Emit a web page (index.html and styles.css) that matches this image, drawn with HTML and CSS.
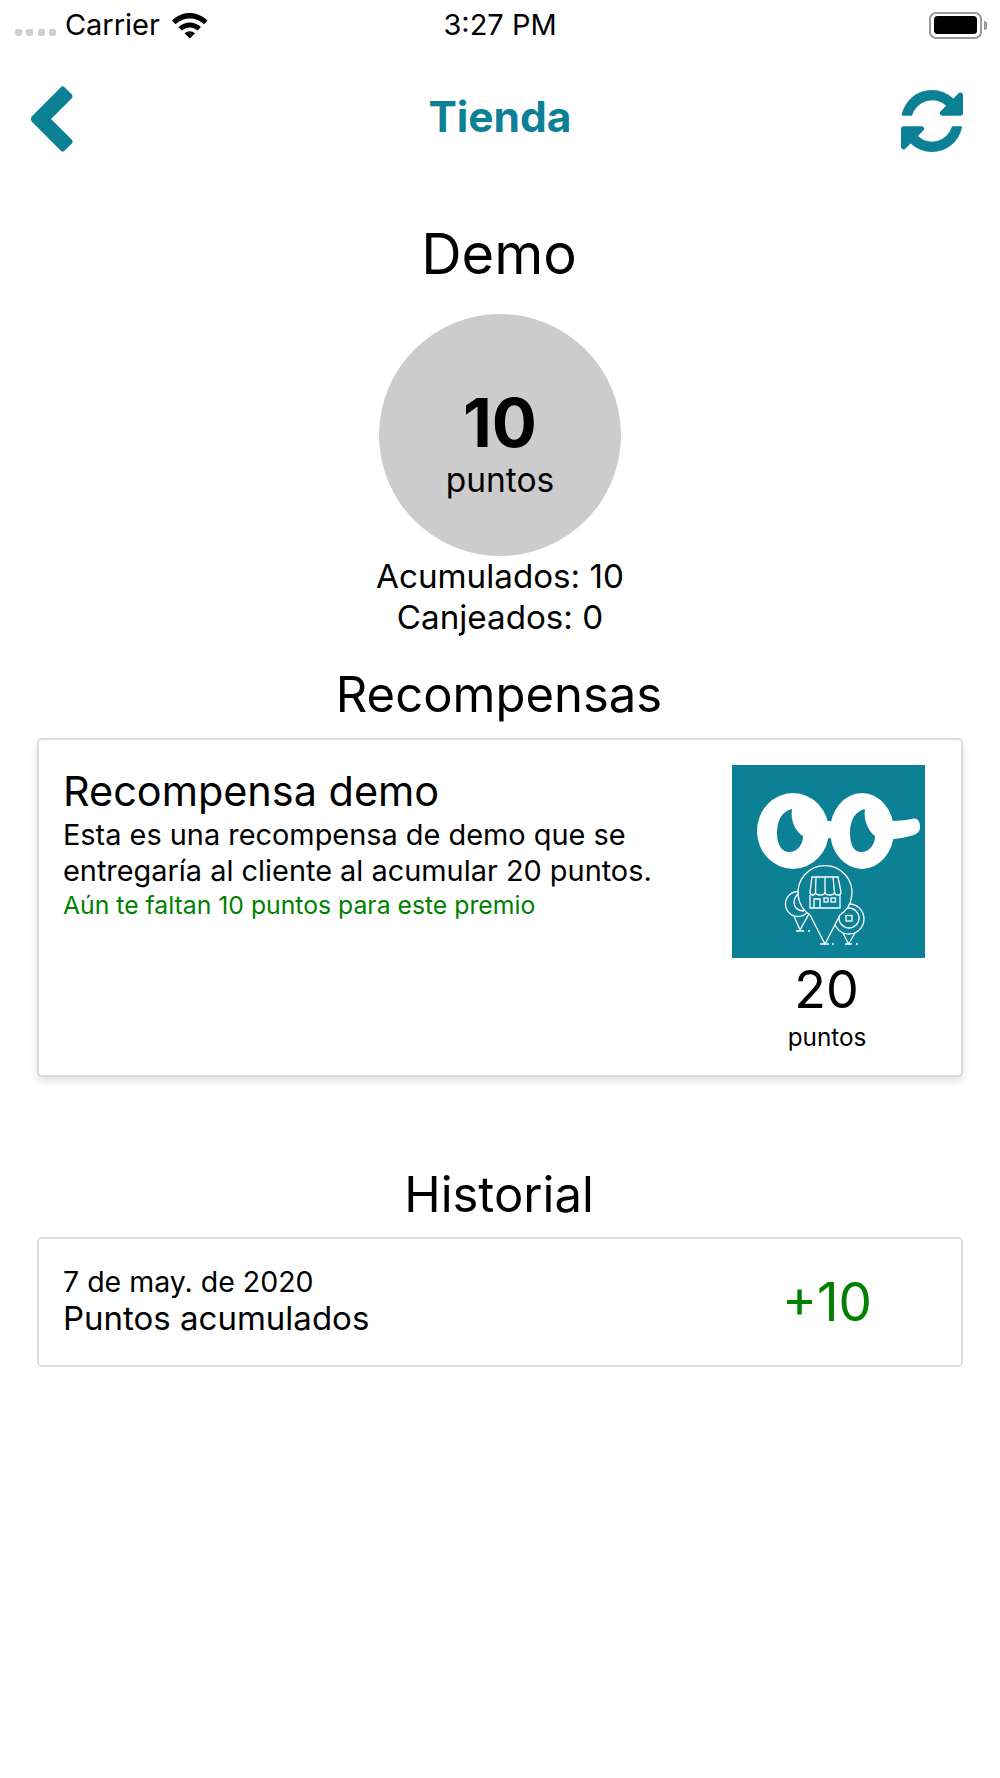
FILE: index.html
```html
<!DOCTYPE html>
<html lang="es">
<head>
<meta charset="utf-8">
<title>Tienda</title>
<link rel="stylesheet" href="styles.css">
</head>
<body>
<div class="status">
  <div class="status-left">
    <div class="dots"><i></i><i></i><i></i><i></i></div>
    <span class="carrier">Carrier</span>
    <svg class="wifi" width="38" height="28" viewBox="0 0 38 28"><path d="M1 9.500C11-.5 26-.5 36.500 9.500l-3.500 3.700C25 5.500 12.500 5.500 4.500 13.200z"/><path d="M7.500 16C14 10 23.500 10 30 16l-3.500 3.600C22 15.500 15.500 15.500 11 19.600z"/><path d="M13.500 22.200c3.200-2.700 7.300-2.700 10.500 0L18.800 27.500z"/></svg>
  </div>
  <span class="clock">3:27 PM</span>
  <div class="battery"><div class="battery-body"><div class="battery-fill"></div></div><div class="battery-cap"></div></div>
</div>
<header class="nav">
  <svg class="back" width="44" height="66" viewBox="0 0 44 66"><path fill="#0c8196" d="M30.600 1.400a3 3 0 0 1 4.200 0l6.800 6.800a3 3 0 0 1 0 4.200L21 33l20.600 20.600a3 3 0 0 1 0 4.200l-6.800 6.800a3 3 0 0 1-4.200 0L2.200 36a4.200 4.200 0 0 1 0-6z"/></svg>
  <h1 class="nav-title">Tienda</h1>
  <svg class="refresh" width="62" height="62" viewBox="0 0 1536 1536"><path fill="#0c8196" d="M1511 928q0 5-1 7-64 268-268 434.500t-478 166.500q-146 0-282.500-55t-243.500-157l-129 129q-19 19-45 19t-45-19-19-45v-448q0-26 19-45t45-19h448q26 0 45 19t19 45-19 45l-137 137q71 66 161 102t187 36q134 0 250-65t186-179q11-17 53-117 8-23 30-23h192q13 0 22.500 9.500t9.500 22.500zm25-800v448q0 26-19 45t-45 19h-448q-26 0-45-19t-19-45 19-45l138-138q-148-137-349-137-134 0-250 65t-186 179q-11 17-53 117-8 23-30 23h-199q-13 0-22.500-9.500t-9.500-22.500v-7q65-268 270-434.500t480-166.500q146 0 284 55.500t245 156.500l130-129q19-19 45-19t45 19 19 45z"/></svg>
</header>
<main class="content">
  <h2 class="name">Demo</h2>
  <div class="circle">
    <span class="circle-num">10</span>
    <span class="circle-label">puntos</span>
  </div>
  <p class="stat">Acumulados: 10</p>
  <p class="stat">Canjeados: 0</p>
  <h2 class="section section-rewards">Recompensas</h2>
  <section class="card card-reward">
    <div class="reward-text">
      <h3 class="reward-title">Recompensa demo</h3>
      <p class="reward-desc">Esta es una recompensa de demo que se entregaría al cliente al acumular 20 puntos.</p>
      <p class="reward-hint">Aún te faltan 10 puntos para este premio</p>
    </div>
    <div class="reward-side">
      <svg class="logo" width="193" height="193" viewBox="0 0 193 193">
        <rect width="193" height="193" fill="#0c8196"/>
        <g fill="#fff">
          <ellipse cx="61" cy="66" rx="36" ry="38"/>
          <ellipse cx="130" cy="66" rx="32" ry="38"/>
          <path d="M90 56H104V73H88z"/>
          <path d="M158 56C168 56 176 55 182 53.500C186 53 188 57 188 62C188 67 185 69 180 70.500C174 72.500 166 73.500 158 74.500z"/>
        </g>
        <g fill="#0c8196">
          <path d="M60 44C51 46 45 54 45 68C45 80 50 87 57 87C66 87 71 79 71 71C64 67 58 56 60 44z"/>
          <path d="M133 44C124 46 118 54 118 68C118 80 122 87 129 87C138 87 143 79 143 71C137 67 131 56 133 44z"/>
        </g>
        <g fill="none" stroke="#fff" stroke-width="1.300">
          <circle cx="66" cy="139" r="12.500"/>
          <path d="M70 127.500C60 129 58 146 72 146"/>
          <path d="M62 151L68 165L78 147"/>
          <circle cx="117" cy="154" r="15"/>
          <circle cx="117" cy="153" r="10"/>
          <rect x="114" y="150.500" width="6" height="5.500"/>
          <path d="M111 168L116.500 179L123 168"/>
          <path fill="#0c8196" d="M78 150A27 27 0 1 1 108 150L93 179z"/>
          <path d="M78 127L80 112H106L109 127"/>
          <path d="M84 112L83.500 127M93 112V127M101 112L102.500 127"/>
          <path d="M78 127C78 131 83.500 131 83.500 127C83.500 131 93 131 93 127C93 131 102.500 131 102.500 127C102.500 131 109 131 109 127"/>
          <path d="M78 130V143H108V130"/>
          <path d="M82 143V134H88V143"/>
          <rect x="92" y="133" width="4" height="4"/>
          <rect x="99" y="133" width="4.500" height="4"/>
          <path d="M64 166H72M76 166H78M88 179H97M100 179H102M113 179H120M124 179H126"/>
        </g>
      </svg>
      <span class="side-num">20</span>
      <span class="side-label">puntos</span>
    </div>
  </section>
  <h2 class="section section-history">Historial</h2>
  <section class="card card-history">
    <div class="history-text">
      <p class="history-date">7 de may. de 2020</p>
      <p class="history-label">Puntos acumulados</p>
    </div>
    <span class="history-points">+10</span>
  </section>
</main>
</body>
</html>
```
FILE: styles.css
```css
* { box-sizing: border-box; }
html, body { margin: 0; padding: 0; }
body {
  width: 1000px;
  height: 1778px;
  background: #fff;
  color: #000;
  font-family: Inter, "Liberation Sans", sans-serif;
  overflow: hidden;
}
h1, h2, h3, p { margin: 0; font-weight: 400; }

.status {
  height: 50px;
  padding: 0 13px 0 15px;
  position: relative;
  display: flex;
  align-items: center;
  justify-content: space-between;
}
.status-left { display: flex; align-items: center; }
.dots { display: flex; gap: 4.300px; margin-top: 15px; margin-right: 9px; }
.dots i { width: 7px; height: 7px; border-radius: 2px; background: #cfcfcf; }
.carrier { font-size: 29px; line-height: 50px; }
.wifi { margin-left: 11px; }
.clock {
  position: absolute;
  left: 0;
  right: 0;
  text-align: center;
  font-size: 29px;
  line-height: 50px;
}
.battery { display: flex; align-items: center; }
.battery-body {
  width: 53px;
  height: 27px;
  border: 2px solid #9a9a9a;
  border-radius: 7px;
  padding: 2.500px 3px;
}
.battery-fill { width: 100%; height: 100%; background: #000; border-radius: 3.500px; }
.battery-cap {
  width: 3px;
  height: 9px;
  margin-left: 2px;
  background: #9a9a9a;
  border-radius: 0 3px 3px 0;
}

.nav {
  height: 133px;
  padding: 36px 37px 0 30px;
  display: flex;
  justify-content: space-between;
  align-items: flex-start;
  position: relative;
}
.refresh { margin-top: 4px; }
.nav-title {
  position: absolute;
  left: 0;
  right: 0;
  top: 40px;
  text-align: center;
  font-size: 42.500px;
  line-height: 54px;
  font-weight: 700;
  color: #0c8196;
}

.content {
  padding: 0 37px;
  display: flex;
  flex-direction: column;
  align-items: center;
}
.name { font-size: 56px; line-height: 68px; margin-top: 37px; padding-right: 2px; }
.circle {
  width: 242px;
  height: 242px;
  margin-top: 26px;
  border-radius: 50%;
  background: #cccccc;
  display: flex;
  flex-direction: column;
  align-items: center;
  justify-content: center;
}
.circle-num { font-size: 67px; line-height: 78px; font-weight: 700; margin-top: 14px; }
.circle-label { font-size: 33.500px; line-height: 40px; margin-top: -1.500px; }
.stat { font-size: 33.200px; line-height: 41px; }
.section { font-size: 49px; line-height: 64px; padding-right: 2px; }
.section-rewards { margin-top: 24.500px; }
.section-history { margin-top: 86px; }

.card {
  width: 926px;
  background: #fff;
  border: 2px solid #dcdcdc;
  border-radius: 5px;
  display: flex;
  justify-content: space-between;
  padding: 0 24px;
}
.card-reward {
  height: 339px;
  margin-top: 11px;
  padding-top: 25px;
  box-shadow: 0 4px 8px rgba(0, 0, 0, 0.12);
}
.reward-text { width: 620px; }
.reward-title { font-size: 41.400px; line-height: 48px; margin-top: 2px; }
.reward-desc { font-size: 28.900px; line-height: 36px; margin-top: 2px; }
.reward-hint { font-size: 24.750px; line-height: 30px; margin-top: 1px; color: #008000; }
.reward-side {
  width: 193px;
  margin-right: 12px;
  display: flex;
  flex-direction: column;
  align-items: center;
}
.logo { display: block; }
.side-num { font-size: 52px; line-height: 63px; padding-right: 4px; }
.side-label { font-size: 24.300px; line-height: 30px; margin-top: 1px; padding-right: 3px; }

.card-history {
  height: 130px;
  margin-top: 10px;
  padding-bottom: 2px;
  align-items: center;
}
.history-date { font-size: 28.500px; line-height: 36px; }
.history-label { font-size: 33px; line-height: 37px; }
.history-points {
  width: 193px;
  margin-right: 12px;
  margin-top: 3px;
  padding-right: 3px;
  text-align: center;
  color: #008000;
  font-size: 53px;
}
```
